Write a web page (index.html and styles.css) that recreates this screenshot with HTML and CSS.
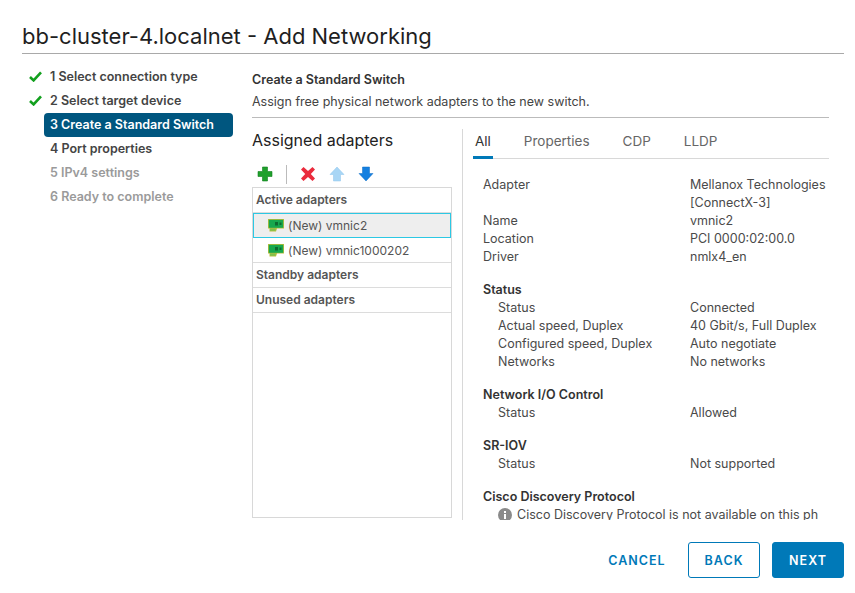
FILE: index.html
```html
<!DOCTYPE html>
<html>
<head>
    <title>Add Networking</title>
    <link rel="stylesheet" href="styles.css">
</head>
<body>
    <div class="dialog">
        <h1 class="dialog-title">bb-cluster-4.localnet - Add Networking</h1>

        <div class="dialog-body">
            <ul class="steps">
                <li class="step done">
                    <svg class="check" viewBox="0 0 13 11"><path d="M1 6l3.600 3.400L12 1.400" fill="none" stroke="#12a01e" stroke-width="2.600"/></svg>
                    1 Select connection type
                </li>
                <li class="step done">
                    <svg class="check" viewBox="0 0 13 11"><path d="M1 6l3.600 3.400L12 1.400" fill="none" stroke="#12a01e" stroke-width="2.600"/></svg>
                    2 Select target device
                </li>
                <li class="step current">3 Create a Standard Switch</li>
                <li class="step">4 Port properties</li>
                <li class="step muted">5 IPv4 settings</li>
                <li class="step muted">6 Ready to complete</li>
            </ul>

            <div class="content">
                <h2 class="content-title">Create a Standard Switch</h2>
                <p class="content-sub">Assign free physical network adapters to the new switch.</p>

                <div class="columns">
                    <div class="adapters">
                        <h3 class="adapters-title">Assigned adapters</h3>
                        <div class="toolbar">
                            <svg class="tool" viewBox="0 0 16 16"><path d="M5.500 1h5v4.500H15v5h-4.500V15h-5v-4.500H1v-5h4.500z" fill="#1fa02c" stroke="#12801e" stroke-width=".6"/></svg>
                            <span class="tool-sep"></span>
                            <svg class="tool" viewBox="0 0 16 16"><path d="M3.500 1L8 5l4.500-4L15 3.500 10.800 8l4.200 4.500-2.500 2.500L8 11l-4.500 4L1 12.500 5.200 8 1 3.500z" fill="#ea2b3c"/></svg>
                            <svg class="tool tool-gap" viewBox="0 0 16 16"><path d="M8 1l7 7.500h-3.500V15h-7V8.500H1z" fill="#a9d6f5" stroke="#8cc4ec" stroke-width=".5"/></svg>
                            <svg class="tool" viewBox="0 0 16 16"><path d="M8 15L1 7.500h3.500V1h7v6.500H15z" fill="#1580e0" stroke="#0f6cc4" stroke-width=".5"/></svg>
                        </div>
                        <div class="adapter-list">
                            <div class="group">Active adapters</div>
                            <div class="adapter selected">
                                <svg class="nic" viewBox="0 0 16 13"><path d="M0 0h16v9.500H9l-1 3H1.500v-3H0z" fill="#b9bd3c"/><rect x=".8" y=".8" width="14.400" height="8" fill="#17a84e"/><rect x="2" y="9.500" width="5.500" height="2.200" fill="#7fc24a"/><rect x="7" y="3" width="3" height="3.500" fill="#0c6a30"/><rect x="11.500" y="3.500" width="2" height="2.500" fill="#0c6a30"/></svg>
                                (New) vmnic2
                            </div>
                            <div class="adapter">
                                <svg class="nic" viewBox="0 0 16 13"><path d="M0 0h16v9.500H9l-1 3H1.500v-3H0z" fill="#b9bd3c"/><rect x=".8" y=".8" width="14.400" height="8" fill="#17a84e"/><rect x="2" y="9.500" width="5.500" height="2.200" fill="#7fc24a"/><rect x="7" y="3" width="3" height="3.500" fill="#0c6a30"/><rect x="11.500" y="3.500" width="2" height="2.500" fill="#0c6a30"/></svg>
                                (New) vmnic1000202
                            </div>
                            <div class="group">Standby adapters</div>
                            <div class="group">Unused adapters</div>
                        </div>
                    </div>

                    <div class="details">
                        <div class="tabs">
                            <span class="tab active">All</span>
                            <span class="tab">Properties</span>
                            <span class="tab">CDP</span>
                            <span class="tab">LLDP</span>
                        </div>
                        <div class="props">
                            <div class="row"><span class="key">Adapter</span><span class="val">Mellanox Technologies<br>[ConnectX-3]</span></div>
                            <div class="row"><span class="key">Name</span><span class="val">vmnic2</span></div>
                            <div class="row"><span class="key">Location</span><span class="val">PCI 0000:02:00.0</span></div>
                            <div class="row"><span class="key">Driver</span><span class="val">nmlx4_en</span></div>

                            <div class="section">Status</div>
                            <div class="row sub"><span class="key">Status</span><span class="val">Connected</span></div>
                            <div class="row sub"><span class="key">Actual speed, Duplex</span><span class="val">40 Gbit/s, Full Duplex</span></div>
                            <div class="row sub"><span class="key">Configured speed, Duplex</span><span class="val">Auto negotiate</span></div>
                            <div class="row sub"><span class="key">Networks</span><span class="val">No networks</span></div>

                            <div class="section">Network I/O Control</div>
                            <div class="row sub"><span class="key">Status</span><span class="val">Allowed</span></div>

                            <div class="section">SR-IOV</div>
                            <div class="row sub"><span class="key">Status</span><span class="val">Not supported</span></div>

                            <div class="section">Cisco Discovery Protocol</div>
                            <div class="row sub note">
                                <svg class="info" viewBox="0 0 14 14"><circle cx="7" cy="7" r="7" fill="#8a8a8a"/><rect x="6" y="6" width="2" height="5" fill="#fff"/><rect x="6" y="3" width="2" height="2" fill="#fff"/></svg>
                                Cisco Discovery Protocol is not available on this ph
                            </div>
                        </div>
                    </div>
                </div>
            </div>
        </div>

        <div class="dialog-footer">
            <button class="btn btn-link">CANCEL</button>
            <button class="btn btn-outline">BACK</button>
            <button class="btn btn-primary">NEXT</button>
        </div>
    </div>
</body>
</html>
```

FILE: styles.css
```css
* {
    box-sizing: border-box;
}

html, body {
    margin: 0;
    height: 100%;
    overflow: hidden;
}

body {
    font-family: Inter, "Noto Sans", Arial, sans-serif;
    background-color: #fff;
    color: #3d3d3d;
    font-size: 13px;
}

.dialog {
    width: 855px;
    height: 593px;
    padding: 20px 11px 0 22px;
}

.dialog-title {
    margin: 0;
    height: 34px;
    font-size: 22px;
    line-height: 32px;
    font-weight: 400;
    color: #1f1f1f;
    border-bottom: 1px solid #a9a9a9;
}

.dialog-body {
    display: flex;
    height: 465px;
}

.steps {
    list-style: none;
    margin: 11px 0 0;
    padding: 0;
    width: 230px;
    flex: none;
}

.step {
    position: relative;
    height: 24px;
    width: 189px;
    margin-left: 22px;
    padding-left: 6px;
    font-size: 12.500px;
    line-height: 24px;
    font-weight: 600;
    color: #444;
    border-radius: 4px;
    white-space: nowrap;
}

.step.current {
    background-color: #00567f;
    color: #fff;
}

.step.muted {
    color: #9a9a9a;
}

.check {
    position: absolute;
    left: -15px;
    top: 6px;
    width: 13px;
    height: 11px;
}

.content {
    flex: 1;
    min-width: 0;
    padding-top: 17px;
    padding-right: 15px;
}

.content-title {
    margin: 0;
    font-size: 12.500px;
    line-height: 18px;
    font-weight: 600;
    color: #333;
}

.content-sub {
    margin: 4px 0 0;
    padding-bottom: 6px;
    font-size: 12.500px;
    line-height: 18px;
    border-bottom: 1px solid #bbb;
    color: #444;
}

.columns {
    display: flex;
    height: 391px;
    margin-top: 11px;
    overflow: hidden;
}

.adapters {
    width: 211px;
    flex: none;
    padding-right: 11px;
    border-right: 1px solid #d8d8d8;
}

.adapters-title {
    margin: 0;
    font-size: 16px;
    line-height: 22px;
    font-weight: 400;
    color: #222;
}

.toolbar {
    display: flex;
    align-items: center;
    height: 26px;
    margin-top: 10px;
    padding-left: 5px;
}

.tool {
    width: 16px;
    height: 16px;
    flex: none;
}

.tool-gap {
    margin: 0 13px;
}

.tool-sep {
    width: 1px;
    height: 19px;
    background-color: #bbb;
    margin: 0 13px;
}

.adapter-list {
    width: 200px;
    height: 331px;
    border: 1px solid #d8d8d8;
}

.group {
    height: 25px;
    padding-left: 3px;
    font-size: 12px;
    line-height: 24px;
    font-weight: 600;
    color: #565656;
    border-bottom: 1px solid #dcdcdc;
}

.adapter {
    display: flex;
    align-items: center;
    height: 25px;
    padding-left: 15px;
    font-size: 12px;
    color: #555;
    border-bottom: 1px solid #dcdcdc;
}

.adapter.selected {
    background-color: #eee;
    border: 1px solid #2cc8e4;
    padding-left: 14px;
}

.nic {
    width: 16px;
    height: 13px;
    margin-right: 4px;
    flex: none;
}

.details {
    flex: 1;
    min-width: 0;
    overflow: hidden;
    padding-left: 10px;
}

.tabs {
    display: flex;
    gap: 29px;
    height: 30px;
    border-bottom: 1px solid #d8d8d8;
}

.tab {
    padding: 0 2px;
    font-size: 13.500px;
    line-height: 24px;
    height: 30px;
    color: #666;
}

.tab.active {
    color: #333;
    border-bottom: 3px solid #0079b8;
}

.props {
    padding: 17px 0 0 10px;
    white-space: nowrap;
}

.row {
    display: flex;
    line-height: 18px;
    font-size: 12.500px;
    color: #4a4a4a;
}

.key {
    width: 207px;
    flex: none;
}

.row.sub {
    padding-left: 15px;
}

.row.sub .key {
    width: 192px;
}

.section {
    margin-top: 15px;
    font-size: 12.500px;
    line-height: 18px;
    font-weight: 600;
    color: #333;
}

.row.note {
    align-items: center;
    gap: 5px;
}

.info {
    width: 14px;
    height: 14px;
    flex: none;
}

.dialog-footer {
    display: flex;
    justify-content: flex-end;
    gap: 12px;
    margin-top: 23px;
}

.btn {
    height: 36px;
    font-family: inherit;
    font-size: 12.500px;
    font-weight: 600;
    letter-spacing: 1px;
    border-radius: 3px;
    border: 1px solid #0079b8;
}

.btn-link {
    width: 88px;
    margin-right: -5px;
    background: none;
    border-color: transparent;
    color: #0079b8;
}

.btn-outline {
    width: 72px;
    background-color: #fff;
    color: #0079b8;
}

.btn-primary {
    width: 72px;
    background-color: #0079b8;
    color: #fff;
}
```
